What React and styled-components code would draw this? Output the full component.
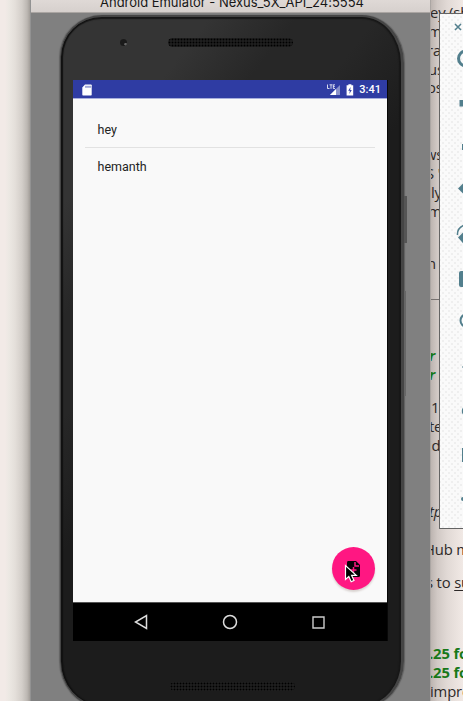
import React from "react";
import styled, { createGlobalStyle } from "styled-components";

const Global = createGlobalStyle`
  *{box-sizing:border-box}
  body{margin:0;background:#f0e9e4;overflow:hidden}
`;

const Desktop = styled.main`
  position: relative;
  width: 463px;
  height: 701px;
  overflow: hidden;
  display: grid;
  grid-template-columns: 30px 400px 33px;
  font-family: "Open Sans", sans-serif;
`;

const Backdrop = styled.div`
  background: linear-gradient(90deg, #f2eae7 0 5px, #ece8e3 9px, #e4dfda 15px, #d3cec9 22px, #bdb8b3 27px, #a39e99 30px);
`;

const EmulatorWindow = styled.section`
  background: #808080;
  border-left: 1px solid #929292;
  display: flex;
  flex-direction: column;
  overflow: hidden;
  height: 701px;
`;

const TitleBar = styled.header`
  height: 13px;
  flex: none;
  background: linear-gradient(#dfd9d6, #d6d0cd);
  border-bottom: 1px solid #aaa5a2;
  overflow: hidden;
  display: flex;
  justify-content: center;
  align-items: flex-end;
  padding-left: 3px;
  color: #171717;
  font: 13px/20px Inter, sans-serif;
  letter-spacing: -0.02px;
  white-space: pre;
`;

const PhoneBody = styled.div`
  flex: none;
  width: 344px;
  height: 692px;
  margin: 2px 0 0 29px;
  border-radius: 42px 42px 40px 40px / 42px 48px 46px 46px;
  border: solid #454545;
  border-width: 2px 3px 2px 1px;
  background: linear-gradient(128deg, #343434 0 17%, #272727 27% 36%, #1c1c1c 48%);
  box-shadow: inset 2px 0 1px #111, inset 0 2px 1px #191919, inset -2px 0 1px #181818, -1px 0 1px #626262, 1px 0 1px #606060;
  display: flex;
  flex-direction: column;
  padding: 0 10px 0 13px;
`;

const Forehead = styled.div`
  height: 63px;
  flex: none;
  display: flex;
  align-items: flex-start;
  padding: 21px 0 0 46px;
`;

const CameraLens = styled.i`
  width: 7px;
  height: 7px;
  margin-top: 1px;
  border-radius: 50%;
  background: radial-gradient(circle at 80% 75%, #666 0 1px, #1a1a1a 1.7px);
`;

const Speaker = styled.i`
  display: block;
  width: 125px;
  height: 9px;
  border-radius: 5px;
  margin-left: ${(p) => p.$offset}px;
  background: radial-gradient(circle, #000 0 0.8px, #1e1e1e 1.1px) 0 0 / 3px 3px;
`;

const Screen = styled.div`
  width: 315px;
  height: 561px;
  flex: none;
  margin-left: -1px;
  background: #f9f9f9;
  display: flex;
  flex-direction: column;
  border-right: 1px solid #080808;
`;

const StatusBar = styled.div`
  height: 19px;
  flex: none;
  display: flex;
  align-items: center;
  padding: 1px 6px 0 9px;
  background: #2f3ca3;
  border-bottom: 1px solid #a7aedc;
  color: #fff;
  font: 500 11px/17px Roboto, sans-serif;
`;

const StatusIcons = styled.div`
  display: flex;
  align-items: center;
  margin-left: auto;
  gap: 5px;
`;

const NoteList = styled.ul`
  flex: 1;
  margin: 0;
  padding: 12px 12px 0;
  list-style: none;
  font: 12.5px/37px Roboto, sans-serif;
  color: #232323;
  position: relative;
`;

const NoteRow = styled.li`
  height: 36px;
  padding-left: 12.5px;
  & + & { height: 37px; border-top: 1px solid #e2e2e2; line-height: 38px; }
`;

const AddButton = styled.button`
  position: absolute;
  right: 12px;
  bottom: 12px;
  width: 43px;
  height: 43px;
  padding: 0;
  border: 0;
  border-radius: 50%;
  background: #ff1782;
  box-shadow: 0 2px 2px #d9d3d0;
  svg { display: block; }
`;

const NavBar = styled.nav`
  height: 39px;
  flex: none;
  background: #000;
  border-top: 1px solid #555;
  display: flex;
  justify-content: center;
  align-items: center;
  padding-right: 1px;
  gap: 74px;
  svg { display: block; }
`;

const Chin = styled.div`
  padding-top: 41px;
`;

const SideKey = styled.i`
  position: absolute;
  left: 404px;
  top: ${(p) => p.$top}px;
  width: ${(p) => p.$width}px;
  height: ${(p) => p.$height}px;
  background: ${(p) => p.$tone};
`;

const Article = styled.aside`
  position: relative;
  overflow: hidden;
  height: 701px;
  border-left: 1px solid #aba6a3;
  background: linear-gradient(90deg, #bdb5b1, #d1c9c5 20%, #e1d9d5 50%, #f1e9e5);
  font-size: 14.8px;
  letter-spacing: -0.15px;
  line-height: 19px;
  color: #2d2928;
`;

const ArticleLine = styled.p`
  margin: ${(p) => p.$gap || 0}px 0 0 ${(p) => p.$shift || 0}px;
  height: 19px;
  white-space: pre;
  color: ${(p) => (p.$green ? "#187818" : "inherit")};
  font-weight: ${(p) => (p.$green ? 700 : 400)};
  font-style: ${(p) => (p.$italic ? "italic" : "normal")};
  u { text-underline-offset: 2px; text-decoration-thickness: 1px; }
`;

const Rule = styled.hr`
  margin: 26px 0 0;
  border: 0;
  height: 1px;
  background: #777270;
`;

const ToolPanel = styled.aside`
  position: absolute;
  left: 439px;
  top: 13px;
  width: 50px;
  height: 516px;
  border: 1px solid #646464;
  background: radial-gradient(circle, #e4e4e4 0 0.5px, transparent 0.9px) 0 0 / 6px 6px,
    radial-gradient(circle, #e4e4e4 0 0.5px, transparent 0.9px) 3px 3px / 6px 6px, #fafafa;
  svg { display: block; }
`;

const LINES = [
  { text: "ey (sh", gap: 3, shift: -1 }, { text: "m", shift: -3 }, { text: "ra", shift: -4 },
  { text: "us", shift: -3 }, { text: "os", shift: -4, gap: -1 },
  { text: "ws", shift: -6, gap: 48 }, { text: "S '", shift: -5 },
  { text: "ly" }, { text: "m", shift: -3 }, { text: "n t", shift: -4, gap: 33 },
  { rule: true },
  { text: "r W", green: true, italic: true, shift: -2, gap: 46 },
  { text: "r c", green: true, italic: true, shift: -2 },
  { text: "1", gap: 14 }, { text: "te", shift: -2 }, { text: "id", shift: -3 },
  { text: "tp", italic: true, shift: -2, gap: 47 },
  { text: "Hub m", shift: -7, gap: 19 },
  { text: "s to su", gap: 14, shift: -5, link: true },
  { text: ".25 fo", green: true, gap: 52, shift: -2 },
  { text: ".25 fo", green: true, shift: -2 }, { text: "impro", shift: -1 },
];

const SdCard = () => (
  <svg width="10" height="12" viewBox="0 0 10 12">
    <path d="M3 .5h6q.7 0 .7.7v9.6q0 .7-.7.7H1q-.7 0-.7-.7V3.5z" fill="#fff" />
    <path d="M4 1.8v2M6 1.8v2M8 1.8v2" stroke="#303ea5" strokeWidth=".9" />
  </svg>
);

const Signal = () => (
  <svg width="14" height="12" viewBox="0 0 14 12">
    <path d="M13 1v10H3z" fill="#8991cb" />
    <path d="M9 5v6H3z" fill="#fff" />
    <path d="M.5 .5v4h2M2.5 .8h3M4 .8v4M8 .8H6.3v3.7H8M6.3 2.6h1.5" fill="none" stroke="#fff" strokeWidth=".8" />
  </svg>
);

const Battery = () => (
  <svg width="8" height="12" viewBox="0 0 8 12">
    <path d="M.6 1.3h1.8V.3h3v1h1.8v10.2H.6z" fill="#fff" />
    <path d="M4.6 3L2.2 6.8h1.7L3.3 10 5.8 6H4.2z" fill="#303ea5" />
  </svg>
);

const NoteAdd = () => (
  <svg width="43" height="43" viewBox="0 0 43 43">
    <path d="M16 14h8l4 4v10.500q0 1.500-1.500 1.500H16.500q-1.500 0-1.500-1.500V15.500q0-1.500 1-1.500z" fill="#090308" />
    <path d="M23 15v4h4M21.500 20v6M18.500 23h6" fill="none" stroke="#ff1782" strokeWidth="1.500" />
    <path d="M13.500 18.500v14l3.300-3 2.400 5.200 2.800-1.300-2.400-5h4.700z" fill="#000" stroke="#fff" strokeWidth="1.200" />
  </svg>
);

const ToolIcons = () => (
  <svg width="48" height="514" viewBox="440 14 48 514" fill="none" stroke="#527f8d" strokeWidth="2.500">
    <path d="M455 24l6 6M461 24l-6 6" strokeWidth="1.500" />
    <path d="M466 51a7.500 7.500 0 1 0 0 15" strokeWidth="3" />
    <path d="M459.500 100h10v6.500h-10zM462 144h8v6h-8zM458 188.500l8-8v16z" fill="#527f8d" stroke="none" />
    <path d="M457.500 235q-.5-7 7-10" strokeWidth="1.500" />
    <path d="M458 237.500l6-6 7 7-6 7z" fill="#527f8d" stroke="none" />
    <path d="M461 271h10v16h-10q-2 0-2-2v-12q0-2 2-2z" fill="#527f8d" stroke="none" />
    <path d="M466 314.500a5.500 6 0 1 0 0 12" strokeWidth="2" />
    <path d="M462 367h1" strokeWidth="1" />
    <circle cx="467.500" cy="411" r="4.500" />
    <path d="M463 449h10v12h-10z" strokeWidth="2" />
    <circle cx="463" cy="499" r="2" fill="#527f8d" stroke="none" />
  </svg>
);

export default function App() {
  return (
    <>
      <Global />
      <Desktop>
        <Backdrop />
        <EmulatorWindow>
          <TitleBar>Android Emulator - Nexus_5X_API_24:5554</TitleBar>
          <PhoneBody>
            <Forehead><CameraLens /><Speaker $offset={41} /></Forehead>
            <Screen>
              <StatusBar>
                <SdCard />
                <StatusIcons><Signal /><Battery /><span>3:41</span></StatusIcons>
              </StatusBar>
              <NoteList>
                <NoteRow>hey</NoteRow>
                <NoteRow>hemanth</NoteRow>
                <AddButton aria-label="Add note"><NoteAdd /></AddButton>
              </NoteList>
              <NavBar>
                <svg width="14" height="16"><path d="M12.500 1.500v13L1.500 8z" fill="none" stroke="#ddd" strokeWidth="1.500" /></svg>
                <svg width="16" height="16"><circle cx="8" cy="8" r="6.500" fill="none" stroke="#ddd" strokeWidth="1.500" /></svg>
                <svg width="13" height="13"><path d="M1 1h11v11H1z" fill="none" stroke="#ccc" strokeWidth="1.400" /></svg>
              </NavBar>
            </Screen>
            <Chin><Speaker $offset={96} /></Chin>
          </PhoneBody>
        </EmulatorWindow>
        <Article>
          {LINES.map((line, i) =>
            line.rule ? <Rule key={i} /> : (
              <ArticleLine key={i} $gap={line.gap} $shift={line.shift} $green={line.green} $italic={line.italic}>
                {line.link ? <>s to <u>su</u></> : line.text}
              </ArticleLine>
            )
          )}
        </Article>
        <SideKey $top={196} $height={47} $width={3} $tone="#555" />
        <SideKey $top={291} $height={105} $width={2} $tone="#666" />
        <ToolPanel><ToolIcons /></ToolPanel>
      </Desktop>
    </>
  );
}
